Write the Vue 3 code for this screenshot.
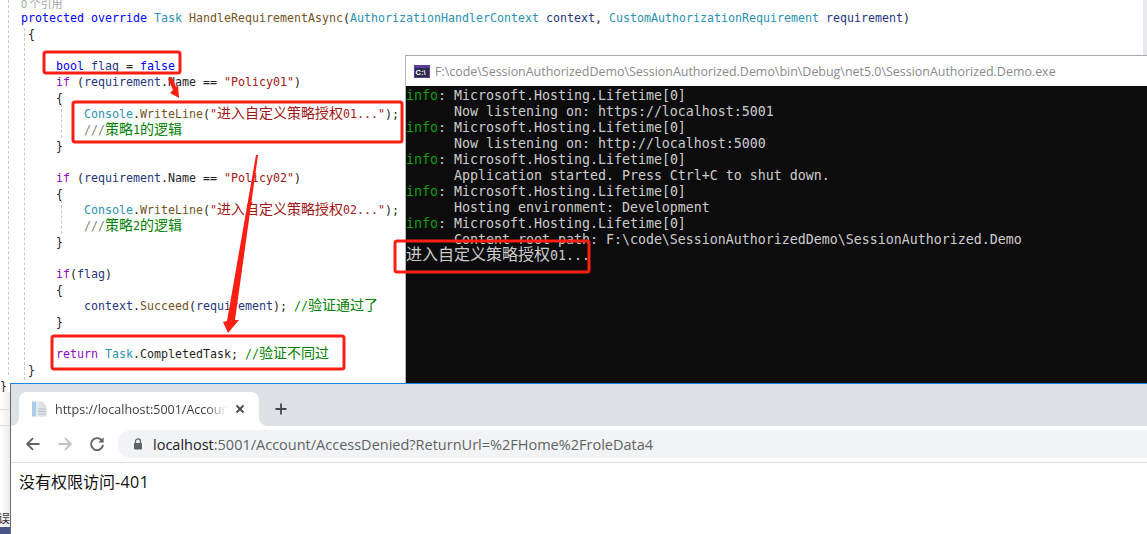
<script setup>
const cjk = /([\u4e00-\u9fff]+)/
const split = (text) => text.split(cjk).filter(Boolean).map((t) => ({ t, cn: cjk.test(t) }))

const row = (...tokens) => tokens.map(([c, text]) => split(text).map((s) => ({ c, ...s }))).flat()
const P = (t) => ['pl', t]

const codeLines = [
  row(P('   '), ['kw', 'protected override '], ['ty', 'Task '], ['me', 'HandleRequirementAsync'], P('('), ['ty', 'AuthorizationHandlerContext '], ['pa', 'context'], P(', '), ['ty', 'CustomAuthorizationRequirement '], ['pa', 'requirement'], P(')')),
  row(P('    {')),
  row(P(' ')),
  row(P('        '), ['kw', 'bool '], ['pa', 'flag'], P(' = '), ['kw', 'false']),
  row(P('        '), ['ct', 'if'], P(' ('), ['pa', 'requirement'], P('.Name == '), ['st', '"Policy01"'], P(')')),
  row(P('        {')),
  row(P('            '), ['ty', 'Console'], P('.'), ['me', 'WriteLine'], P('('), ['st', '"进入自定义策略授权01..."'], P(');')),
  row(P('            '), ['gr', '///'], ['co', '策略1的逻辑']),
  row(P('        }')),
  row(P(' ')),
  row(P('        '), ['ct', 'if'], P(' ('), ['pa', 'requirement'], P('.Name == '), ['st', '"Policy02"'], P(')')),
  row(P('        {')),
  row(P('            '), ['ty', 'Console'], P('.'), ['me', 'WriteLine'], P('('), ['st', '"进入自定义策略授权02..."'], P(');')),
  row(P('            '), ['gr', '///'], ['co', '策略2的逻辑']),
  row(P('        }')),
  row(P(' ')),
  row(P('        '), ['ct', 'if'], P('('), ['pa', 'flag'], P(')')),
  row(P('        {')),
  row(P('            '), ['pa', 'context'], P('.'), ['me', 'Succeed'], P('('), ['pa', 'requirement'], P('); '), ['co', '//验证通过了']),
  row(P('        }')),
  row(P(' ')),
  row(P('        '), ['ct', 'return '], ['ty', 'Task'], P('.CompletedTask; '), ['co', '//验证不同过']),
  row(P('    }')),
  row(P('}')),
]

const consoleLines = [
  { info: true, text: 'Microsoft.Hosting.Lifetime[0]' },
  { text: '      Now listening on: https://localhost:5001' },
  { info: true, text: 'Microsoft.Hosting.Lifetime[0]' },
  { text: '      Now listening on: http://localhost:5000' },
  { info: true, text: 'Microsoft.Hosting.Lifetime[0]' },
  { text: '      Application started. Press Ctrl+C to shut down.' },
  { info: true, text: 'Microsoft.Hosting.Lifetime[0]' },
  { text: '      Hosting environment: Development' },
  { info: true, text: 'Microsoft.Hosting.Lifetime[0]' },
  { text: '      Content root path: F:\\code\\SessionAuthorizedDemo\\SessionAuthorized.Demo' },
].map((l) => ({ ...l, parts: split(l.text) }))
const lastLine = split('进入自定义策略授权01...')

const boxes = [
  { x: 44, y: 52, w: 136, h: 21 },
  { x: 73, y: 102, w: 329, h: 40 },
  { x: 395, y: 241, w: 194, h: 31 },
  { x: 52, y: 336, w: 292, h: 33 },
]
</script>

<template>
  <div class="desk">
    <div class="ide">
      <div class="lens">0 个引用</div>
      <div v-for="(line, i) in codeLines" :key="i" class="code-line">
        <span v-for="(s, j) in line" :key="j" :class="[s.c, { cn: s.cn }]">{{ s.t }}</span>
      </div>
      <i class="guide g1"></i>
      <i class="guide g2"></i>
      <i class="guide g3"></i>
      <i class="guide g4"></i>
      <div class="scroll"></div>
      <div class="behind">
        <i class="behind-line"></i>
        <i class="behind-line"></i>
        <span class="behind-text">误</span>
        <i class="behind-bar"></i>
      </div>
    </div>

    <section class="console">
      <header class="con-title">
        <svg class="con-icon" width="16" height="13" viewBox="0 0 16 13">
          <rect width="16" height="13" fill="#5c3d99" />
          <rect x="1" y="3" width="14" height="9" fill="#2d2a4a" />
          <text x="1.6" y="10.4" font-size="7.5" font-weight="700" font-family="Liberation Sans, sans-serif" fill="#fff">C:\</text>
        </svg>
        <span>F:\code\SessionAuthorizedDemo\SessionAuthorized.Demo\bin\Debug\net5.0\SessionAuthorized.Demo.exe</span>
      </header>
      <div class="con-body">
        <div v-for="(l, i) in consoleLines" :key="i" class="con-line">
          <template v-if="l.info"><span class="info">info</span>: </template><span v-for="(p, j) in l.parts" :key="j">{{ p.t }}</span>
        </div>
        <div class="con-line">
          <span v-for="(p, j) in lastLine" :key="j" :class="{ 'con-cn': p.cn }">{{ p.t }}</span>
        </div>
      </div>
    </section>

    <section class="browser">
      <div class="tabs">
        <div class="tab">
          <svg width="16" height="16" viewBox="0 0 16 16">
            <rect x="1" y="0.5" width="5" height="15" fill="#a9cbe6" />
            <rect x="5" y="0.5" width="6.5" height="15" fill="#e6e9ee" />
            <path d="M11.5 .5 15.5 4.5V15.5H8V.5Z" fill="#dfe3e8" />
            <path d="M7 8h8M7 10.5h8M7 13h8" stroke="#b8c0ca" stroke-width="1" />
          </svg>
          <span class="tab-title">https://localhost:5001/Account/AccessDenied</span>
          <svg class="tab-x" width="10" height="10" viewBox="0 0 10 10">
            <path d="M1.5 1.5 8.5 8.5M8.5 1.5 1.5 8.5" stroke="#45484d" stroke-width="1.8" />
          </svg>
        </div>
        <svg class="plus" width="12" height="12" viewBox="0 0 12 12">
          <path d="M6 .5v11M.5 6h11" stroke="#45484d" stroke-width="1.8" />
        </svg>
      </div>
      <div class="toolbar">
        <svg width="16" height="16" viewBox="0 0 16 16">
          <path d="M14.5 8H2.5M8 2.2 2.2 8 8 13.8" fill="none" stroke="#5f6368" stroke-width="1.9" />
        </svg>
        <svg width="16" height="16" viewBox="0 0 16 16">
          <path d="M1.5 8h12M8 2.2 13.8 8 8 13.8" fill="none" stroke="#bdc1c6" stroke-width="1.9" />
        </svg>
        <svg width="16" height="16" viewBox="0 0 16 16">
          <path d="M13.2 5A6 6 0 1 0 14 9" fill="none" stroke="#5f6368" stroke-width="1.9" />
          <path d="M14.6 1.2V6.4H9.4Z" fill="#5f6368" />
        </svg>
        <div class="omni">
          <svg width="10" height="12" viewBox="0 0 10 12">
            <path d="M2.5 5V3.4a2.5 2.5 0 0 1 5 0V5" fill="none" stroke="#5f6368" stroke-width="1.3" />
            <rect x="1" y="5" width="8" height="6.5" rx="1" fill="#5f6368" />
          </svg>
          <span class="url"><b>localhost</b>:5001/Account/AccessDenied?ReturnUrl=%2FHome%2FroleData4</span>
        </div>
      </div>
      <main class="page">没有权限访问<span class="page-num">-401</span></main>
    </section>

    <svg class="marks" width="1147" height="534" viewBox="0 0 1147 534">
      <rect v-for="(b, i) in boxes" :key="i" :x="b.x" :y="b.y" :width="b.w" :height="b.h" rx="2" fill="none" stroke="#fb1e12" stroke-width="3" />
      <polygon points="168,79 172,77 176,87 178,85 179,98 170,93 173,90" fill="#fb1e12" />
      <polygon points="256,155 258,155 235,320 239,320 228,333 223,322 227,321" fill="#fb1e12" />
    </svg>
  </div>
</template>

<style>
html, body { margin: 0; background: #fff; overflow: hidden; }
</style>

<style scoped>
.desk {
  position: relative;
  width: 1147px;
  height: 534px;
  overflow: hidden;
  background: #fff;
}
.ide {
  position: relative;
  height: 534px;
  background: #fff;
  font-family: "DejaVu Sans Mono", monospace;
  font-size: 11.63px;
  color: #1e1e1e;
}
.lens {
  height: 10px;
  padding-left: 21px;
  font: 11px/6px "Noto Sans CJK SC", sans-serif;
  color: #a5a5a5;
  overflow: hidden;
}
.code-line {
  height: 16px;
  line-height: 16px;
  white-space: pre;
}
.code-line span { white-space: pre; }
.code-line .cn {
  font-family: "Noto Sans CJK SC", sans-serif;
  font-size: 14px;
  line-height: 0;
}
.pl { color: #1e1e1e; }
.kw { color: #0000ff; }
.ty { color: #2b91af; }
.me { color: #74531f; }
.pa { color: #1f377f; }
.st { color: #a31515; }
.ct { color: #8f08c4; }
.co { color: #008000; }
.gr { color: #808080; }
.guide {
  position: absolute;
  width: 0;
  border-left: 1px dashed #c8c8c8;
}
.g1 { left: 8px; top: 0; height: 375px; }
.g2 { left: 24px; top: 28px; height: 352px; }
.g3 { left: 61px; top: 104px; height: 34px; }
.g4 { left: 61px; top: 200px; height: 34px; }
.scroll {
  position: absolute;
  right: 0;
  top: 0;
  width: 4px;
  height: 55px;
  background: #e8e8ec;
}
.behind {
  position: absolute;
  left: 0;
  top: 392px;
  width: 10px;
  height: 142px;
  overflow: hidden;
  background: linear-gradient(to right, #fff, #ececec);
}
.behind-line {
  position: absolute;
  left: 0;
  width: 10px;
  height: 1px;
  background: #dcdcdc;
}
.behind-line:nth-child(1) { top: 17px; }
.behind-line:nth-child(2) { top: 33px; }
.behind-text {
  position: absolute;
  left: -2px;
  top: 119px;
  font: 12px/14px "Noto Sans CJK SC", sans-serif;
  color: #333;
}
.behind-bar {
  position: absolute;
  left: 0;
  top: 135px;
  width: 10px;
  height: 7px;
  background: #4a5688;
}
.console {
  position: absolute;
  left: 405px;
  top: 55px;
  width: 742px;
  height: 328px;
  display: flex;
  flex-direction: column;
  border-top: 1px solid #a8a8a8;
  border-left: 1px solid #b5b5b5;
  box-sizing: border-box;
  background: #0c0c0c;
}
.con-title {
  flex: none;
  height: 30px;
  display: flex;
  align-items: center;
  gap: 5px;
  padding-left: 8px;
  background: #fff;
  font: 12.44px "Open Sans", sans-serif;
  color: #8a8a8a;
  white-space: nowrap;
}
.con-icon { flex: none; }
.con-body {
  flex: 1;
  padding-top: 2px;
  font-family: "DejaVu Sans Mono", monospace;
  font-size: 13.29px;
  color: #cccccc;
  overflow: hidden;
}
.con-line {
  height: 16px;
  line-height: 16px;
  white-space: pre;
}
.info { color: #13a10e; }
.con-cn {
  font-family: "Noto Sans CJK SC", sans-serif;
  font-size: 16px;
  line-height: 0;
}
.browser {
  position: absolute;
  left: 10px;
  top: 383px;
  width: 1137px;
  height: 151px;
  display: flex;
  flex-direction: column;
  box-sizing: border-box;
  border-top: 1px solid #1a86e0;
  border-left: 1px solid #6b6b6b;
  background: #fff;
  font-family: "Open Sans", "Noto Sans CJK SC", sans-serif;
}
.tabs {
  flex: none;
  height: 42px;
  display: flex;
  align-items: flex-end;
  padding-left: 8px;
  background: #dee1e6;
}
.tab {
  position: relative;
  width: 240px;
  height: 34px;
  box-sizing: border-box;
  display: flex;
  align-items: center;
  gap: 8px;
  padding: 0 14px 0 12px;
  background: #fff;
  border-radius: 8px 8px 0 0;
}
.tab::before,
.tab::after {
  content: "";
  position: absolute;
  bottom: 0;
  width: 8px;
  height: 8px;
}
.tab::before {
  left: -8px;
  background: radial-gradient(circle at 0 0, #dee1e6 7.5px, #fff 8px);
}
.tab::after {
  right: -8px;
  background: radial-gradient(circle at 100% 0, #dee1e6 7.5px, #fff 8px);
}
.tab-title {
  flex: 1;
  overflow: hidden;
  white-space: nowrap;
  font-size: 12.5px;
  color: #3c4043;
  -webkit-mask-image: linear-gradient(to right, #000 88%, transparent);
  mask-image: linear-gradient(to right, #000 88%, transparent);
}
.tab-x { flex: none; }
.plus { margin: 0 0 11px 16px; }
.toolbar {
  flex: none;
  height: 36px;
  display: flex;
  align-items: center;
  gap: 16px;
  padding-left: 14px;
  background: #fff;
  border-bottom: 1px solid #dcdcdc;
}
.omni {
  flex: 1;
  height: 28px;
  display: flex;
  align-items: center;
  gap: 10px;
  padding-left: 15px;
  margin-left: -3px;
  border-radius: 14px 0 0 14px;
  background: #f1f3f4;
}
.url {
  font-size: 14.5px;
  color: #5f6368;
  white-space: nowrap;
}
.url b { font-weight: 400; color: #202124; }
.page {
  padding: 9px 0 0 8px;
  font-size: 16px;
  line-height: 20px;
  color: #111;
}
.page-num { letter-spacing: 0.4px; }
.marks {
  position: absolute;
  left: 0;
  top: 0;
  pointer-events: none;
}
</style>
